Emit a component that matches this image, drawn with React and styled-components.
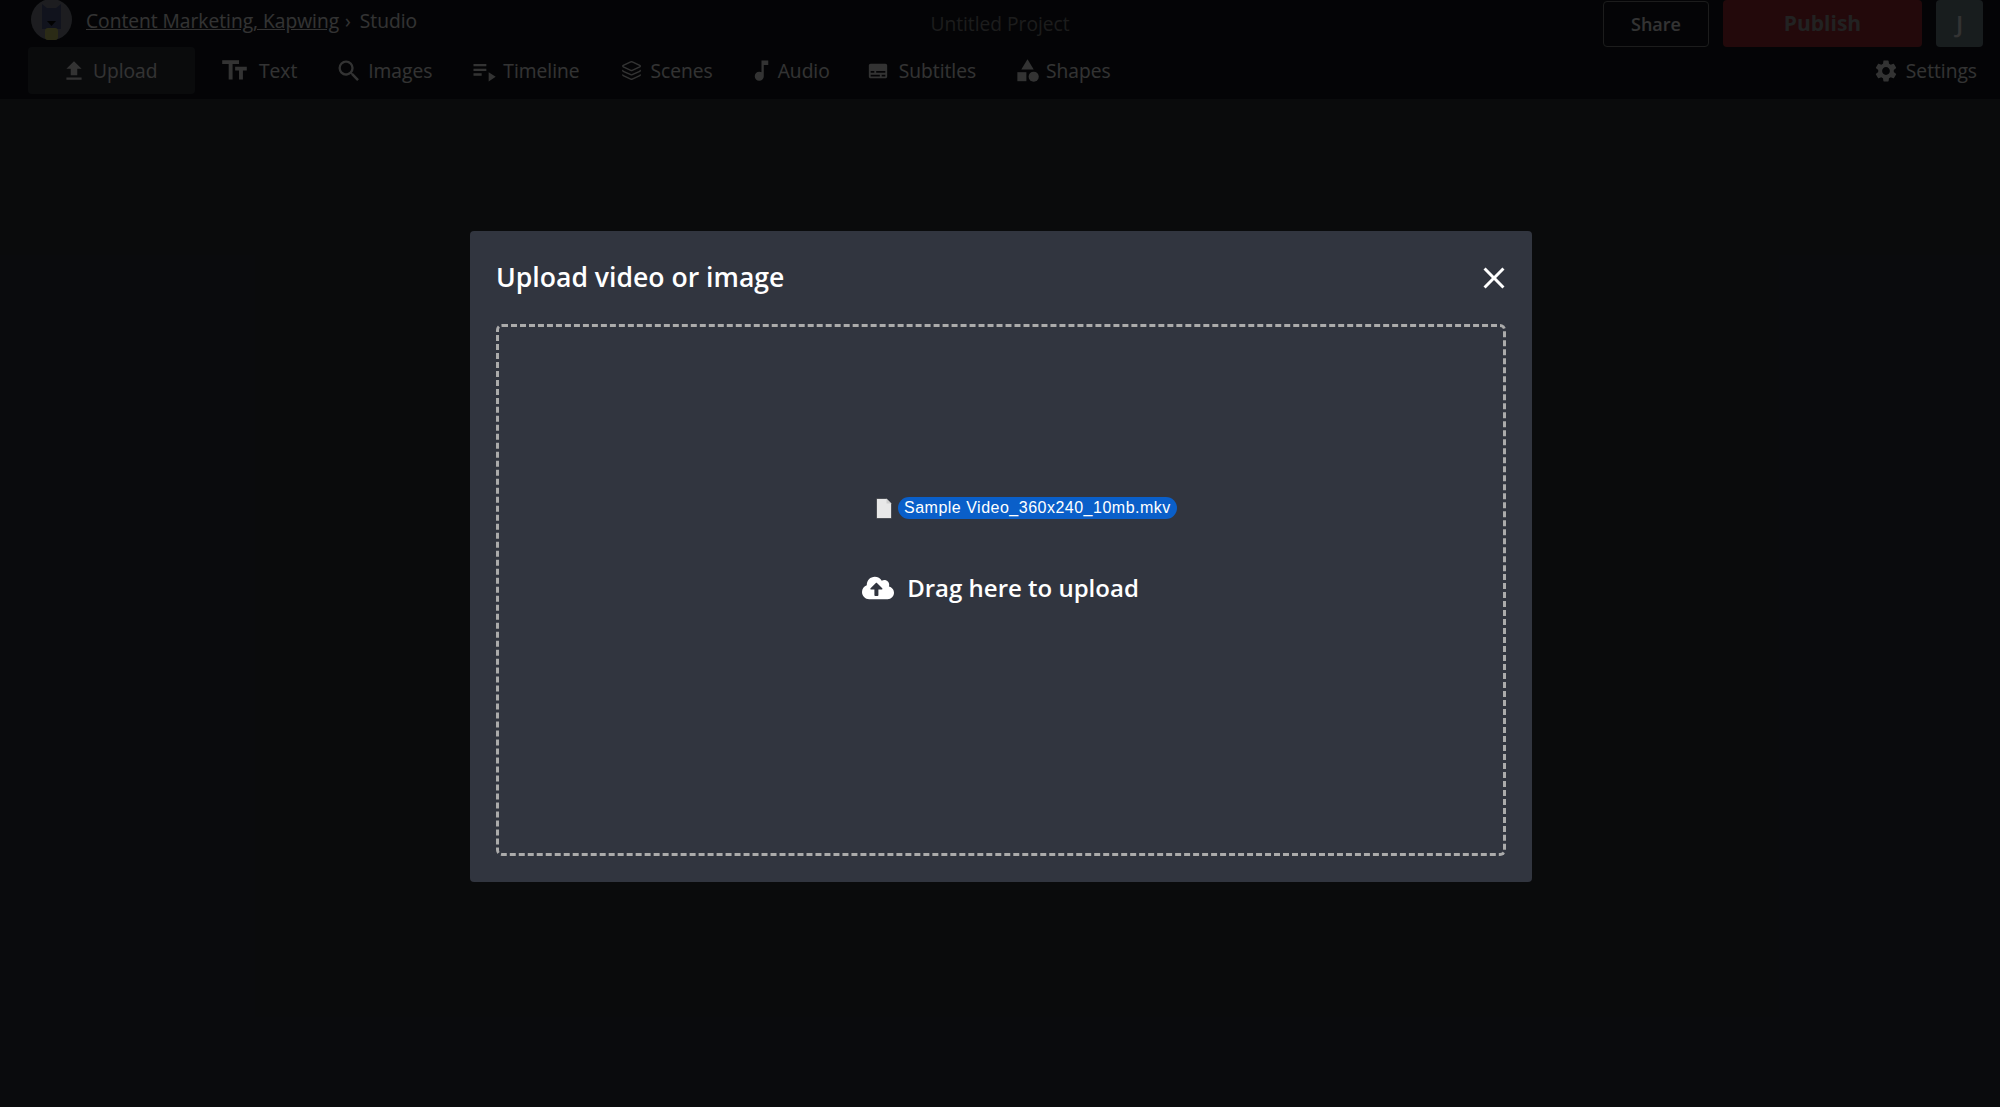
import React from 'react';
import styled, {createGlobalStyle} from 'styled-components';
//Icons
import {MdFileUpload, MdTextFields, MdSearch, MdPlaylistPlay, MdMusicNote, MdSubtitles, MdCategory, MdSettings, MdClose} from 'react-icons/md';
import {FaCloudUploadAlt} from 'react-icons/fa';
import {Layers} from 'lucide-react';

const GlobalStyle = createGlobalStyle`
    html, body{
        margin: 0;
        padding: 0;
        height: 100%;
        background: #32373f;
        font-family: "Open Sans", "Liberation Sans", sans-serif;
        overflow: hidden;
    }
`

const tabs = [
    {label: 'Text', icon: <MdTextFields size={31}/>, gap: 9},
    {label: 'Images', icon: <MdSearch size={28}/>, gap: 5},
    {label: 'Timeline', icon: <MdPlaylistPlay size={28}/>, gap: 5},
    {label: 'Scenes', icon: <Layers size={21} strokeWidth={1.6}/>, gap: 9, lead: 3},
    {label: 'Audio', icon: <MdMusicNote size={27}/>, gap: 3, lead: -3},
    {label: 'Subtitles', icon: <MdSubtitles size={22}/>, gap: 10, lead: -1},
    {label: 'Shapes', icon: <MdCategory size={27}/>, gap: 5},
];

//Avatar cat
const CatAvatar = () => (
    <svg width="41" height="41" viewBox="0 0 41 41">
        <circle cx="20.5" cy="20.5" r="20.5" fill="#8f93a0"/>
        <path d="M11 30V5l5 4h9l5-4v25z" fill="#54608f"/>
        <path d="M16 22h9l-4.500 5z" fill="#0c0c0c"/>
        <rect x="14" y="29" width="13" height="12" rx="3" fill="#d4d670"/>
    </svg>
);

//Dragged file icon
const FileGlyph = () => (
    <svg width="16" height="21" viewBox="0 0 16 21">
        <path d="M.5 .5h10l5 5v15H.5z" fill="#e8e8e8" stroke="#22252c" strokeWidth=".6"/>
        <path d="M10.500 .5v5h5z" fill="#cfcfcf"/>
    </svg>
);

const App = () => {
    return(
        <Page>
            <GlobalStyle/>
            <Header>
                <TopRow>
                    <Breadcrumb>
                        <Avatar><CatAvatar/></Avatar>
                        <CrumbLink>Content Marketing, Kapwing</CrumbLink>
                        <span>› Studio</span>
                    </Breadcrumb>
                    <ProjectTitle>Untitled Project</ProjectTitle>
                    <Actions>
                        <ShareButton>Share</ShareButton>
                        <PublishButton>Publish</PublishButton>
                        <UserButton>J</UserButton>
                    </Actions>
                </TopRow>
                <TabRow>
                    <UploadTab><MdFileUpload size={26}/>Upload</UploadTab>
                    <TabList>
                        {tabs.map((tab) => (
                            <Tab key={tab.label} $gap={tab.gap} $lead={tab.lead}>{tab.icon}{tab.label}</Tab>
                        ))}
                    </TabList>
                    <Tab $gap={7}><MdSettings size={26}/>Settings</Tab>
                </TabRow>
            </Header>
            <Overlay>
                <Modal>
                    <ModalHead>
                        <ModalTitle>Upload video or image</ModalTitle>
                        <CloseButton><MdClose size={36}/></CloseButton>
                    </ModalHead>
                    <DropZone>
                        <DragGhost>
                            <FileGlyph/>
                            <FileName>Sample Video_360x240_10mb.mkv</FileName>
                        </DragGhost>
                        <DropLabel><FaCloudUploadAlt size={32}/>Drag here to upload</DropLabel>
                    </DropZone>
                </Modal>
            </Overlay>
        </Page>
    )
}

const Page = styled.div`
    position: relative;
    width: 100%;
    height: 100vh;
    overflow: hidden;
    background: #32373f;
`

const Header = styled.header`
    height: 99px;
    background: #14181f;
    color: #ffffff;
    overflow: hidden;
`

const TopRow = styled.div`
    display: grid;
    grid-template-columns: 1fr auto 1fr;
    height: 47px;
    padding: 0 17px;
`

const Breadcrumb = styled.div`
    display: flex;
    align-items: flex-start;
    padding-left: 14px;
    font-size: 19.2px;
    line-height: 41px;
    white-space: nowrap;
    span{
        margin-left: 6px;
        word-spacing: 4px;
    }
`

const Avatar = styled.div`
    width: 41px;
    height: 41px;
    margin: -1px 14px 0 0;
`

const CrumbLink = styled.a`
    color: #ffffff;
    text-decoration: underline;
`

const ProjectTitle = styled.div`
    font-size: 19.2px;
    line-height: 47px;
    color: #8c8c8c;
`

const Actions = styled.div`
    display: flex;
    justify-content: flex-end;
    gap: 14px;
    height: 47px;
`

const ShareButton = styled.div`
    box-sizing: border-box;
    width: 106px;
    height: 46px;
    margin: 1px 0 0 1px;
    border: 1px solid #8a8a8a;
    border-radius: 4px;
    font-size: 18px;
    font-weight: 600;
    line-height: 44px;
    text-align: center;
`

const PublishButton = styled.div`
    width: 199px;
    height: 47px;
    border-radius: 4px;
    background: #ad2f38;
    color: #a8a8a8;
    font-size: 21px;
    font-weight: 700;
    line-height: 47px;
    text-align: center;
`

const UserButton = styled.div`
    width: 47px;
    height: 47px;
    border-radius: 4px;
    background: #7a8f98;
    font-size: 24px;
    font-weight: 600;
    line-height: 47px;
    text-align: center;
`

const TabRow = styled.nav`
    display: flex;
    align-items: center;
    height: 47px;
    padding: 0 23px 0 28px;
    font-size: 19.2px;
`

const TabList = styled.div`
    display: flex;
    align-items: center;
    gap: 38px;
    flex: 1;
    margin-left: 24px;
`

const Tab = styled.div`
    display: flex;
    align-items: center;
    gap: ${(props) => props.$gap}px;
    height: 47px;
    margin-left: ${(props) => props.$lead || 0}px;
`

const UploadTab = styled.div`
    display: flex;
    align-items: center;
    gap: 6px;
    box-sizing: border-box;
    width: 167px;
    height: 47px;
    padding-left: 33px;
    border-radius: 4px;
    background: #32373f;
`

const Overlay = styled.div`
    position: absolute;
    inset: 0;
    display: flex;
    justify-content: center;
    align-items: flex-start;
    padding: 231px 0 0 2px;
    background: rgba(0,0,0,0.8);
`

const Modal = styled.div`
    box-sizing: border-box;
    width: 1062px;
    height: 651px;
    padding: 0 26px 26px;
    display: flex;
    flex-direction: column;
    border-radius: 4px;
    background: #31353f;
    color: #ffffff;
`

const ModalHead = styled.div`
    display: flex;
    align-items: center;
    justify-content: space-between;
    height: 93px;
`

const ModalTitle = styled.h2`
    margin: 0 0 2px;
    font-size: 26.6px;
    font-weight: 560;
`

const CloseButton = styled.div`
    display: flex;
    margin-right: -6px;
`

const DropZone = styled.div`
    position: relative;
    flex: 1;
    display: flex;
    align-items: center;
    justify-content: center;
    border: 3px dashed #ababab;
    border-radius: 6px;
`

const DragGhost = styled.div`
    position: absolute;
    top: 170px;
    left: 377px;
    display: flex;
    align-items: center;
    gap: 6px;
`

const FileName = styled.span`
    padding: 0 6px;
    height: 22px;
    border-radius: 11px;
    background: #0a5fc9;
    font-family: "Liberation Sans", Arial, sans-serif;
    font-size: 16px;
    letter-spacing: 0.5px;
    line-height: 22px;
    white-space: nowrap;
`

const DropLabel = styled.div`
    display: flex;
    align-items: center;
    gap: 13px;
    margin: 0 0 5px -1px;
    font-size: 24px;
    font-weight: 560;
`

export default App;
